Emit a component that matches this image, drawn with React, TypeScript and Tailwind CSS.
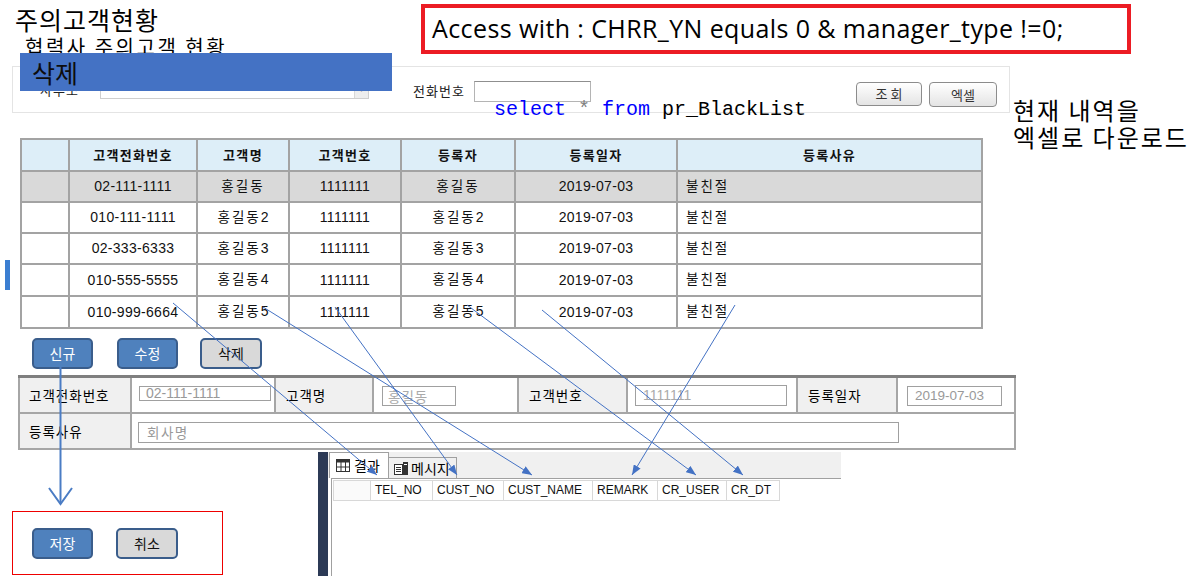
import React from "react";

const rows = [
  ["02-111-1111", "홍길동", "1111111", "홍길동", "2019-07-03", "불친절"],
  ["010-111-1111", "홍길동2", "1111111", "홍길동2", "2019-07-03", "불친절"],
  ["02-333-6333", "홍길동3", "1111111", "홍길동3", "2019-07-03", "불친절"],
  ["010-555-5555", "홍길동4", "1111111", "홍길동4", "2019-07-03", "불친절"],
  ["010-999-6664", "홍길동5", "1111111", "홍길동5", "2019-07-03", "불친절"],
];
const rowH = ["h-[31px]", "h-[31px]", "h-[31px]", "h-[32px]", "h-[32px]"];
const headers = ["", "고객전화번호", "고객명", "고객번호", "등록자", "등록일자", "등록사유"];
const colW = ["w-[48px]", "w-[128px]", "w-[92px]", "w-[112px]", "w-[114px]", "w-[162px]", "w-[305px]"];

const hasHangul = (s: string) => /[\uac00-\ud7a3]/.test(s);

function CellText({ v }: { v: string }) {
  if (!hasHangul(v)) return <span className="tracking-[0.3px]">{v}</span>;
  const m = v.match(/^([\uac00-\ud7a3]+)(.*)$/);
  const k = m ? m[1] : v;
  const rest = m ? m[2] : "";
  return (
    <span>
      <span className="tracking-[2px] text-[13.5px]">{k}</span>
      {rest}
    </span>
  );
}

const gridCols = [
  { name: "TEL_NO", w: "w-[62px]" },
  { name: "CUST_NO", w: "w-[71px]" },
  { name: "CUST_NAME", w: "w-[89px]" },
  { name: "REMARK", w: "w-[65px]" },
  { name: "CR_USER", w: "w-[69px]" },
  { name: "CR_DT", w: "w-[53px]" },
];

function Arrows() {
  const c = "#4472c4";
  const lines: [number, number, number, number][] = [
    [173, 303, 377, 475],
    [263, 307, 532, 475],
    [335, 307, 457, 475],
    [467, 305, 696, 475],
    [542, 310, 743, 475],
    [735, 305, 632, 475],
  ];
  return (
    <svg className="absolute left-0 top-0 pointer-events-none" width="1203" height="576" viewBox="0 0 1203 576">
      <defs>
        <marker id="ah" viewBox="0 0 10 8" refX="10" refY="4" markerWidth="10" markerHeight="8" orient="auto" markerUnits="userSpaceOnUse">
          <path d="M0,0 L10,4 L0,8 z" fill={c} />
        </marker>
      </defs>
      {lines.map(([x1, y1, x2, y2], i) => (
        <line key={i} x1={x1} y1={y1} x2={x2} y2={y2} stroke={c} strokeWidth="1" markerEnd="url(#ah)" />
      ))}
      <line x1="60.5" y1="367" x2="60.5" y2="504" stroke="#4a7cc4" strokeWidth="2" />
      <polyline points="49,488 60.5,504 72,488" fill="none" stroke="#4a7cc4" strokeWidth="2" />
    </svg>
  );
}

function GridIcon() {
  return (
    <svg width="14" height="13" viewBox="0 0 14 13">
      <rect x="0.5" y="0.5" width="13" height="12" fill="#fff" stroke="#333" />
      <rect x="0.5" y="0.5" width="13" height="3" fill="#333" />
      <line x1="5" y1="0" x2="5" y2="13" stroke="#333" />
      <line x1="9.5" y1="0" x2="9.5" y2="13" stroke="#333" />
      <line x1="0" y1="8" x2="14" y2="8" stroke="#333" />
    </svg>
  );
}

function MsgIcon() {
  return (
    <svg width="14" height="13" viewBox="0 0 14 13">
      <rect x="0.5" y="2.5" width="8" height="10" fill="#fff" stroke="#333" />
      <line x1="2" y1="5.5" x2="7" y2="5.5" stroke="#333" />
      <line x1="2" y1="7.5" x2="7" y2="7.5" stroke="#333" />
      <line x1="2" y1="9.5" x2="7" y2="9.5" stroke="#333" />
      <rect x="9" y="0" width="5" height="13" fill="#333" />
      <rect x="10" y="2" width="3" height="1" fill="#fff" />
    </svg>
  );
}

export default function App() {
  return (
    <div className="relative w-[1203px] h-[576px] overflow-hidden bg-white text-black font-['Liberation_Sans','Noto_Sans_CJK_KR',sans-serif]">
      <div className="flex flex-col">
        {/* Title */}
        <h1 className="ml-[15px] mt-[4px] h-[31px] text-[25px] leading-[31px] tracking-[1px] font-normal font-['Noto_Sans_CJK_KR',sans-serif]">주의고객현황</h1>
        <p className="ml-[25px] h-[24px] text-[20px] leading-[24px] tracking-[2.5px] font-['Noto_Sans_CJK_KR',sans-serif]">협력사 주의고객 현황</p>

        {/* Search panel */}
        <div className="ml-[12px] mt-[7px] w-[998px] h-[47px] border border-[#e4e4e4] flex items-start pt-[14px] text-[13px] text-[#222]">
          <span className="ml-[27px] w-[60px] leading-[18px] tracking-[1px] font-['Noto_Sans_CJK_KR',sans-serif]">사무소</span>
          <div className="w-[269px] h-[18px] border border-[#cfcfcf] flex justify-end">
            <div className="w-[14px] h-full bg-[#eeeeee] border-l border-[#d8d8d8] flex items-center justify-center text-[7px] text-[#888]">▼</div>
          </div>
          <span className="ml-[44px] w-[61px] mt-[3px] leading-[14px] tracking-[1px] font-['Noto_Sans_CJK_KR',sans-serif]">전화번호</span>
          <div className="w-[117px] h-[21px] border border-[#b4b4b4] border-t-[#8f8f8f]" />
          <button className="ml-[265px] mt-[1px] w-[66px] h-[24px] rounded-[4px] border border-[#8c8c8c] bg-linear-to-b from-white to-[#e4e4e4] text-[13px] text-[#333] font-['Noto_Sans_CJK_KR',sans-serif]">조 회</button>
          <button className="ml-[7px] mt-[1px] w-[68px] h-[25px] rounded-[4px] border border-[#8c8c8c] bg-linear-to-b from-white to-[#e4e4e4] text-[13px] text-[#333] font-['Noto_Sans_CJK_KR',sans-serif]">엑셀</button>
        </div>

        {/* Data table */}
        <table className="ml-[20px] mt-[25px] w-[961px] border-collapse table-fixed text-[14px] text-[#111]">
          <colgroup>
            {colW.map((w, i) => (
              <col key={i} className={w} />
            ))}
          </colgroup>
          <thead>
            <tr className="h-[32px] bg-[#ddeef8]">
              {headers.map((h, i) => (
                <th key={i} className="border-2 border-[#a3a3a3] text-[13px] font-bold tracking-[1.3px] text-center p-0 font-['Noto_Sans_CJK_KR',sans-serif]">{h}</th>
              ))}
            </tr>
          </thead>
          <tbody>
            {rows.map((r, ri) => (
              <tr key={ri} className={`${rowH[ri]} ${ri === 0 ? "bg-[#d9d9d9]" : "bg-white"}`}>
                <td className="border-2 border-[#a3a3a3] p-0" />
                {r.map((v, ci) => (
                  <td key={ci} className={`border-2 border-[#a3a3a3] p-0 ${ci === 5 ? "text-left pl-[8px]" : "text-center"}`}>
                    <CellText v={v} />
                  </td>
                ))}
              </tr>
            ))}
          </tbody>
        </table>

        {/* Buttons */}
        <div className="ml-[32px] mt-[9px] flex items-start font-['Noto_Sans_CJK_KR',sans-serif] text-[14px]">
          <button className="w-[61px] h-[31px] rounded-[5px] border-2 border-[#3a5d8b] bg-[#4f81bd] text-white">신규</button>
          <button className="ml-[24px] w-[61px] h-[31px] rounded-[5px] border-2 border-[#3a5d8b] bg-[#4f81bd] text-white">수정</button>
          <button className="ml-[22px] w-[62px] h-[31px] rounded-[5px] border-2 border-[#3a5d8b] bg-[#d9d9d9] text-[#111]">삭제</button>
        </div>

        {/* Form */}
        <div className="ml-[18px] mt-[6px] w-[998px] border-t-[3px] border-[#7f7f7f] text-[13.5px]">
          <div className="grid grid-cols-[112px_144px_98px_145px_109px_170px_100px_120px] h-[36px] border-2 border-t-0 border-[#a6a6a6]">
            <div className="bg-[#f0f0f0] border-r-2 border-[#a6a6a6] flex items-center pl-[9px] tracking-[1px] font-['Noto_Sans_CJK_KR',sans-serif]">고객전화번호</div>
            <div className="border-r-2 border-[#a6a6a6] pl-[7px] pt-[8px]">
              <div className="w-[132px] h-[15px] border border-[#a0a0a0] text-[#999] leading-[13px] pl-[6px] text-[14px]">02-111-1111</div>
            </div>
            <div className="bg-[#f0f0f0] border-r-2 border-[#a6a6a6] flex items-center pl-[10px] tracking-[1px] font-['Noto_Sans_CJK_KR',sans-serif]">고객명</div>
            <div className="border-r-2 border-[#a6a6a6] pl-[8px] pt-[8px]">
              <div className="w-[74px] h-[20px] border border-[#a0a0a0] text-[#aaa] leading-[18px] pl-[5px] tracking-[1px] font-['Noto_Sans_CJK_KR',sans-serif]">홍길동</div>
            </div>
            <div className="bg-[#f0f0f0] border-r-2 border-[#a6a6a6] flex items-center pl-[10px] tracking-[1px] font-['Noto_Sans_CJK_KR',sans-serif]">고객번호</div>
            <div className="border-r-2 border-[#a6a6a6] pl-[7px] pt-[7px]">
              <div className="w-[152px] h-[21px] border border-[#a0a0a0] text-[#aaa] text-[14px] leading-[19px] pl-[7px]">1111111</div>
            </div>
            <div className="bg-[#f0f0f0] border-r-2 border-[#a6a6a6] flex items-center pl-[10px] tracking-[1px] font-['Noto_Sans_CJK_KR',sans-serif]">등록일자</div>
            <div className="pl-[9px] pt-[8px]">
              <div className="w-[95px] h-[20px] border border-[#a0a0a0] text-[#999] leading-[18px] pl-[7px]">2019-07-03</div>
            </div>
          </div>
          <div className="flex h-[36px] border-2 border-t-0 border-[#a6a6a6]">
            <div className="w-[112px] bg-[#f0f0f0] border-r-2 border-[#a6a6a6] flex items-center pl-[9px] tracking-[1px] font-['Noto_Sans_CJK_KR',sans-serif]">등록사유</div>
            <div className="pl-[6px] pt-[8px]">
              <div className="w-[761px] h-[21px] border border-[#a0a0a0] text-[#999] leading-[19px] pl-[8px] tracking-[1.5px] font-['Noto_Sans_CJK_KR',sans-serif]">회사명</div>
            </div>
          </div>
        </div>

        {/* Bottom row */}
        <div className="flex items-start">
          <div className="ml-[12px] mt-[61px] w-[211px] h-[64px] border border-[#ee0000] flex items-start pt-[16px] pl-[19px] font-['Noto_Sans_CJK_KR',sans-serif] text-[14px]">
            <button className="w-[61px] h-[31px] rounded-[5px] border-2 border-[#3a5d8b] bg-[#4f81bd] text-white">저장</button>
            <button className="ml-[23px] w-[62px] h-[31px] rounded-[5px] border-2 border-[#3a5d8b] bg-[#d9d9d9] text-[#111]">취소</button>
          </div>
          <div className="ml-[95px] mt-[2px] w-[523px] h-[126px] flex">
            <div className="w-[10px] h-full bg-[#2c3a56]" />
            <div className="flex-1 flex flex-col">
              <div className="h-[26px] bg-[#f0f0f0] flex items-end pl-[1px] text-[14px] font-['Noto_Sans_CJK_KR',sans-serif]">
                <div className="w-[60px] h-[26px] bg-white border border-b-0 border-[#a0a0a0] flex items-center gap-[4px] pl-[6px]">
                  <GridIcon />
                  <span>결과</span>
                </div>
                <div className="w-[68px] h-[21px] border border-l-0 border-b-0 border-[#a0a0a0] flex items-center gap-[3px] pl-[5px]">
                  <MsgIcon />
                  <span>메시지</span>
                </div>
              </div>
              <div className="flex-1 ml-[3px] border-t border-l border-[#a0a0a0] pt-[1px] pl-[1px]">
                <div className="flex h-[21px] text-[12px] text-[#111]">
                  <div className="w-[38px] border border-[#d8d8d8] bg-[#fafafa]" />
                  {gridCols.map((g) => (
                    <div key={g.name} className={`${g.w} border border-l-0 border-[#d8d8d8] pl-[4px] leading-[19px] bg-white`}>{g.name}</div>
                  ))}
                </div>
              </div>
            </div>
          </div>
        </div>
      </div>

      {/* Overlays / annotations */}
      <div className="absolute left-[20px] top-[53px] w-[372px] h-[38px] bg-[#4472c4] pl-[12px] text-[25px] leading-[38px] text-[#0d0d0d] font-['Noto_Sans_CJK_KR',sans-serif]">삭제</div>

      <div className="absolute left-[421px] top-[4px] w-[710px] h-[50px] border-4 border-[#ec1c24] pl-[7px] flex items-center text-[25px] tracking-[0.4px] text-black font-['Open_Sans',sans-serif]">
        Access with : CHRR_YN equals 0 &amp; manager_type !=0;
      </div>

      <div className="absolute left-[494px] top-[97px] text-[20px] leading-[26px] whitespace-pre font-['Liberation_Mono',monospace]">
        <span className="text-[#0000ff]">select</span> <span className="text-[#808080]">*</span> <span className="text-[#0000ff]">from</span> <span className="text-black">pr_BlackList</span>
      </div>

      <div className="absolute left-[1013px] top-[96px] text-[24px] leading-[27px] tracking-[2px] font-['Noto_Sans_CJK_KR',sans-serif]">
        현재 내역을
        <br />
        엑셀로 다운로드
      </div>

      <div className="absolute left-[5px] top-[260px] w-[5px] h-[30px] bg-[#3b7ed1]" />

      <Arrows />
    </div>
  );
}
